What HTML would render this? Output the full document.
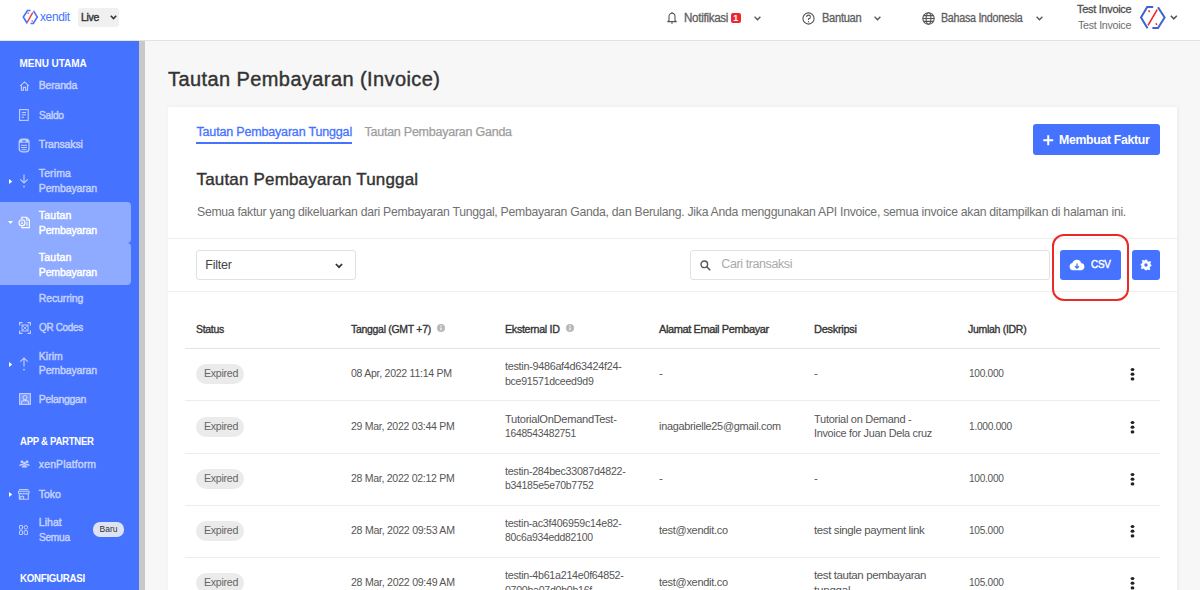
<!DOCTYPE html><html><head><meta charset="utf-8"><style>
*{margin:0;padding:0;box-sizing:border-box}
html,body{width:1200px;height:590px;overflow:hidden;background:#f5f5f5;font-family:"Liberation Sans",sans-serif}
.a{position:absolute;white-space:nowrap}
svg{position:absolute;overflow:visible}
</style></head><body>
<div class="a" style="left:0;top:0;width:1200px;height:40px;background:#fff"></div>
<div class="a" style="left:0;top:40px;width:1200px;height:1px;background:#e3e3e3"></div>
<svg style="left:22px;top:9px" width="17" height="16" viewBox="0 0 17 16">
<g fill="none" stroke="#4573ff" stroke-width="1.6" stroke-linejoin="miter">
<polyline points="8.5,1.5 5.5,1.5 1.3,8 5.3,14.5"/>
<polyline points="11.5,1.8 15.3,8 11.3,14.5 8.5,14.5"/>
</g>
<line x1="10.8" y1="3.5" x2="5.4" y2="13" stroke="#f5333f" stroke-width="1.5"/>
<circle cx="6.2" cy="4.3" r="0.8" fill="#f5333f"/><circle cx="10.2" cy="12" r="0.8" fill="#f5333f"/>
</svg>
<div class="a" style="left:40px;top:10.64px;font-size:12px;line-height:12px;font-weight:normal;color:#4573ff;letter-spacing:-0.388px;">xendit</div>
<div class="a" style="left:78px;top:8px;width:41px;height:19px;background:#f0f0f0;border-radius:3px"></div>
<div class="a" style="left:81px;top:11.77px;font-size:11.5px;line-height:11.5px;font-weight:normal;color:#333;letter-spacing:-0.3px;transform:scaleX(0.9091);transform-origin:0 0;-webkit-text-stroke:0.45px #333;">Live</div>
<svg style="left:110px;top:15px" width="7" height="5" viewBox="0 0 7 5"><polyline points="0.8,0.8 3.5,3.6 6.2,0.8" fill="none" stroke="#333" stroke-width="1.6"/></svg>
<svg style="left:666px;top:11px" width="12" height="13" viewBox="0 0 12 13">
<path d="M3,9.5 V5.5 A3,3.2 0 0 1 9,5.5 V9.5 L10.3,10.6 H1.7 Z" fill="none" stroke="#555" stroke-width="1.1" stroke-linejoin="round"/>
<path d="M5,12 H7" stroke="#555" stroke-width="1.1"/><path d="M6,1 V2.2" stroke="#555" stroke-width="1.1"/>
</svg>
<div class="a" style="left:684px;top:11.54px;font-size:12px;line-height:12px;font-weight:normal;color:#5e5e5e;letter-spacing:-0.3px;transform:scaleX(0.9666);transform-origin:0 0;-webkit-text-stroke:0.3px #5e5e5e;">Notifikasi</div>
<div class="a" style="left:730.5px;top:13px;width:10.5px;height:10px;background:#f0262f;border-radius:2px;color:#fff;font-size:9px;font-weight:bold;line-height:10px;text-align:center">1</div>
<svg style="left:754px;top:16px" width="7" height="5" viewBox="0 0 7 5"><polyline points="0.6,0.8 3.5,3.8 6.4,0.8" fill="none" stroke="#555" stroke-width="1.3"/></svg>
<svg style="left:802px;top:11.5px" width="13" height="13" viewBox="0 0 13 13">
<circle cx="6.5" cy="6.5" r="5.6" fill="none" stroke="#555" stroke-width="1.1"/>
<path d="M4.6,5 A1.9,1.9 0 1 1 6.5,6.9 V8" fill="none" stroke="#555" stroke-width="1.1"/>
<circle cx="6.5" cy="9.7" r="0.7" fill="#555"/>
</svg>
<div class="a" style="left:821.5px;top:11.54px;font-size:12px;line-height:12px;font-weight:normal;color:#5e5e5e;letter-spacing:-0.3px;transform:scaleX(0.9234);transform-origin:0 0;-webkit-text-stroke:0.3px #5e5e5e;">Bantuan</div>
<svg style="left:874px;top:16px" width="7" height="5" viewBox="0 0 7 5"><polyline points="0.6,0.8 3.5,3.8 6.4,0.8" fill="none" stroke="#555" stroke-width="1.3"/></svg>
<svg style="left:922px;top:11.5px" width="13" height="13" viewBox="0 0 13 13">
<g fill="none" stroke="#555" stroke-width="1.1">
<circle cx="6.5" cy="6.5" r="5.7"/><ellipse cx="6.5" cy="6.5" rx="2.4" ry="5.7"/>
<line x1="0.8" y1="6.5" x2="12.2" y2="6.5"/><path d="M1.8,3.6 H11.2 M1.8,9.4 H11.2"/>
</g></svg>
<div class="a" style="left:941px;top:11.54px;font-size:12px;line-height:12px;font-weight:normal;color:#5e5e5e;letter-spacing:-0.3px;transform:scaleX(0.8923);transform-origin:0 0;-webkit-text-stroke:0.3px #5e5e5e;">Bahasa Indonesia</div>
<svg style="left:1036px;top:16px" width="7" height="5" viewBox="0 0 7 5"><polyline points="0.6,0.8 3.5,3.8 6.4,0.8" fill="none" stroke="#555" stroke-width="1.3"/></svg>
<div class="a" style="left:1077px;top:3.97px;font-size:11.5px;line-height:11.5px;font-weight:normal;color:#4e4e4e;letter-spacing:-0.3px;transform:scaleX(0.9513);transform-origin:0 0;-webkit-text-stroke:0.3px #4e4e4e;">Test Invoice</div>
<div class="a" style="left:1078px;top:19.77px;font-size:11.5px;line-height:11.5px;font-weight:normal;color:#6e6e6e;letter-spacing:-0.3px;transform:scaleX(0.9294);transform-origin:0 0;">Test Invoice</div>
<svg style="left:1140px;top:6px" width="26" height="24" viewBox="0 0 26 24">
<g fill="none" stroke="#3d63cf" stroke-width="2" stroke-linejoin="miter">
<polyline points="13.2,0.9 7.2,0.9 1,11.5 7.5,22.3"/>
<polyline points="18,1.2 24.6,11.5 18,22 12.4,22"/>
</g>
<line x1="17.2" y1="3.6" x2="8" y2="19.3" stroke="#f5222d" stroke-width="1.6"/>
<path d="M8.6,4.3 L9.6,6" stroke="#f5222d" stroke-width="1.5"/><path d="M16,17.2 L16.8,19" stroke="#f5222d" stroke-width="1.5"/>
</svg>
<svg style="left:1170px;top:15px" width="8" height="5" viewBox="0 0 8 5"><polyline points="0.8,0.8 3.8,3.8 6.8,0.8" fill="none" stroke="#555" stroke-width="1.6"/></svg>
<div class="a" style="left:0;top:41px;width:139px;height:549px;background:#4573ff"></div>
<div class="a" style="left:139px;top:41px;width:6px;height:549px;background:#c8c8c8"></div>
<div class="a" style="left:0;top:202px;width:130.5px;height:41px;background:#8fabff;border-radius:0 4px 4px 0"></div>
<div class="a" style="left:0;top:243px;width:130.5px;height:42px;background:#8fabff;border-radius:0 4px 4px 0"></div>
<div class="a" style="left:19.5px;top:58.73px;font-size:10px;line-height:10px;font-weight:bold;color:#fff;letter-spacing:-0.029px;">MENU UTAMA</div>
<div class="a" style="left:38.8px;top:80.31px;font-size:10.5px;line-height:10.5px;font-weight:normal;color:#c3d0ff;letter-spacing:-0.21px;-webkit-text-stroke:0.45px #c3d0ff;">Beranda</div>
<div class="a" style="left:38.8px;top:110.11px;font-size:10.5px;line-height:10.5px;font-weight:normal;color:#c3d0ff;letter-spacing:-0.3px;transform:scaleX(0.9723);transform-origin:0 0;-webkit-text-stroke:0.45px #c3d0ff;">Saldo</div>
<div class="a" style="left:38.8px;top:139.41px;font-size:10.5px;line-height:10.5px;font-weight:normal;color:#c3d0ff;letter-spacing:-0.136px;-webkit-text-stroke:0.45px #c3d0ff;">Transaksi</div>
<div class="a" style="left:38.8px;top:168.31px;font-size:10.5px;line-height:10.5px;font-weight:normal;color:#c3d0ff;letter-spacing:0.107px;-webkit-text-stroke:0.45px #c3d0ff;">Terima</div>
<div class="a" style="left:38.8px;top:182.71px;font-size:10.5px;line-height:10.5px;font-weight:normal;color:#c3d0ff;letter-spacing:-0.133px;-webkit-text-stroke:0.45px #c3d0ff;">Pembayaran</div>
<div class="a" style="left:38.8px;top:210.31px;font-size:10.5px;line-height:10.5px;font-weight:normal;color:#fff;letter-spacing:0.223px;-webkit-text-stroke:0.45px #fff;">Tautan</div>
<div class="a" style="left:38.8px;top:224.71px;font-size:10.5px;line-height:10.5px;font-weight:normal;color:#fff;letter-spacing:-0.133px;-webkit-text-stroke:0.45px #fff;">Pembayaran</div>
<div class="a" style="left:38.8px;top:252.31px;font-size:10.5px;line-height:10.5px;font-weight:normal;color:#fff;letter-spacing:0.223px;-webkit-text-stroke:0.45px #fff;">Tautan</div>
<div class="a" style="left:38.8px;top:266.51px;font-size:10.5px;line-height:10.5px;font-weight:normal;color:#fff;letter-spacing:-0.133px;-webkit-text-stroke:0.45px #fff;">Pembayaran</div>
<div class="a" style="left:38.8px;top:293.31px;font-size:10.5px;line-height:10.5px;font-weight:normal;color:#c3d0ff;letter-spacing:-0.135px;-webkit-text-stroke:0.45px #c3d0ff;">Recurring</div>
<div class="a" style="left:38.8px;top:322.31px;font-size:10.5px;line-height:10.5px;font-weight:normal;color:#c3d0ff;letter-spacing:-0.3px;transform:scaleX(0.9428);transform-origin:0 0;-webkit-text-stroke:0.45px #c3d0ff;">QR Codes</div>
<div class="a" style="left:38.8px;top:350.71px;font-size:10.5px;line-height:10.5px;font-weight:normal;color:#c3d0ff;letter-spacing:0.034px;-webkit-text-stroke:0.45px #c3d0ff;">Kirim</div>
<div class="a" style="left:38.8px;top:365.11px;font-size:10.5px;line-height:10.5px;font-weight:normal;color:#c3d0ff;letter-spacing:-0.133px;-webkit-text-stroke:0.45px #c3d0ff;">Pembayaran</div>
<div class="a" style="left:38.8px;top:393.61px;font-size:10.5px;line-height:10.5px;font-weight:normal;color:#c3d0ff;letter-spacing:-0.322px;-webkit-text-stroke:0.45px #c3d0ff;">Pelanggan</div>
<div class="a" style="left:19.5px;top:437.04px;font-size:10px;line-height:10px;font-weight:bold;color:#fff;letter-spacing:-0.3px;transform:scaleX(0.9589);transform-origin:0 0;">APP &amp; PARTNER</div>
<div class="a" style="left:38.8px;top:459.11px;font-size:10.5px;line-height:10.5px;font-weight:normal;color:#c3d0ff;letter-spacing:0.122px;-webkit-text-stroke:0.45px #c3d0ff;">xenPlatform</div>
<div class="a" style="left:38.8px;top:488.91px;font-size:10.5px;line-height:10.5px;font-weight:normal;color:#c3d0ff;letter-spacing:-0.047px;-webkit-text-stroke:0.45px #c3d0ff;">Toko</div>
<div class="a" style="left:38.8px;top:517.41px;font-size:10.5px;line-height:10.5px;font-weight:normal;color:#c3d0ff;letter-spacing:0.037px;-webkit-text-stroke:0.45px #c3d0ff;">Lihat</div>
<div class="a" style="left:38.8px;top:531.81px;font-size:10.5px;line-height:10.5px;font-weight:normal;color:#c3d0ff;letter-spacing:-0.3px;transform:scaleX(0.9681);transform-origin:0 0;-webkit-text-stroke:0.45px #c3d0ff;">Semua</div>
<div class="a" style="left:93px;top:522px;width:31px;height:14.5px;background:#dde3f3;border-radius:7px;color:#333;font-size:8.5px;line-height:14.5px;text-align:center">Baru</div>
<div class="a" style="left:19.5px;top:573.93px;font-size:10px;line-height:10px;font-weight:bold;color:#fff;letter-spacing:-0.3px;transform:scaleX(0.9729);transform-origin:0 0;">KONFIGURASI</div>
<svg style="left:19px;top:81px" width="11" height="10" viewBox="0 0 11 10"><path d="M1.2,4.8 L5.5,0.9 L9.8,4.8 M2.4,3.9 V9.2 H4.4 V6.4 H6.6 V9.2 H8.6 V3.9" fill="none" stroke="#c3d0ff" stroke-width="1.1"/></svg>
<svg style="left:19px;top:109px" width="10" height="12" viewBox="0 0 10 12"><rect x="0.6" y="0.6" width="8.6" height="10.8" fill="none" stroke="#c3d0ff" stroke-width="1.1"/><path d="M2.8,3.5 H7 M2.8,5.8 H7 M2.8,8.2 H5" stroke="#c3d0ff" stroke-width="1"/></svg>
<svg style="left:18px;top:137.5px" width="12" height="15" viewBox="0 0 12 15"><rect x="1.2" y="1" width="9.8" height="12.8" rx="3" fill="none" stroke="#c3d0ff" stroke-width="1.2"/><path d="M1.5,4.8 V3.5 Q1.5,1 5,1 H7 Q10.8,1 10.8,3.5 V4.8 Z" fill="#c3d0ff"/><path d="M4,3 H8 M6,2.5 V4.5" stroke="#4573ff" stroke-width="0.9"/><path d="M3,7.3 H9 M3,9.5 H9 M3.5,11.7 H8.5" stroke="#c3d0ff" stroke-width="1"/></svg>
<svg style="left:19px;top:174px" width="10" height="14" viewBox="0 0 10 14"><path d="M5,0.5 V9 M1.3,5.3 L5,9 L8.7,5.3" fill="none" stroke="#c3d0ff" stroke-width="1.1"/><circle cx="5" cy="12.6" r="0.9" fill="#c3d0ff"/></svg>
<svg style="left:18px;top:216px" width="13" height="13" viewBox="0 0 13 13"><path d="M3.8,3 V1.2 H8.6 L11.4,4 V11.6 H3.8 V10.2" fill="none" stroke="#fff" stroke-width="1.1"/><path d="M8.4,1.2 V4.2 H11.4" fill="none" stroke="#fff" stroke-width="0.9"/><circle cx="4" cy="6.8" r="3" fill="none" stroke="#fff" stroke-width="1.1"/><path d="M3,6 H5 M3,7.6 H5" stroke="#fff" stroke-width="0.8"/><path d="M8,7 H10 M8,9 H10" stroke="#fff" stroke-width="0.9"/></svg>
<svg style="left:18.5px;top:322px" width="12" height="12" viewBox="0 0 12 12"><path d="M0.6,3.5 V0.6 H3.5 M8.5,0.6 H11.4 V3.5 M11.4,8.5 V11.4 H8.5 M3.5,11.4 H0.6 V8.5" fill="none" stroke="#c3d0ff" stroke-width="1.1"/><rect x="3" y="3" width="6" height="6" fill="none" stroke="#c3d0ff" stroke-width="1"/><path d="M3,3 L9,9 M9,3 L3,9" stroke="#c3d0ff" stroke-width="0.8"/></svg>
<svg style="left:19px;top:357px" width="10" height="14" viewBox="0 0 10 14"><path d="M5,9.5 V1 M1.3,4.7 L5,1 L8.7,4.7" fill="none" stroke="#c3d0ff" stroke-width="1.1"/><circle cx="5" cy="12.6" r="0.9" fill="#c3d0ff"/></svg>
<svg style="left:18.5px;top:393px" width="12" height="12" viewBox="0 0 12 12"><rect x="0.6" y="0.6" width="10.8" height="10.8" fill="#c3d0ff" fill-opacity="0.35" stroke="#c3d0ff" stroke-width="1.1"/><circle cx="6" cy="4.5" r="2" fill="none" stroke="#c3d0ff" stroke-width="1.1"/><path d="M2.5,11 V9.5 Q2.5,7.6 4.5,7.6 H7.5 Q9.5,7.6 9.5,9.5 V11" fill="none" stroke="#c3d0ff" stroke-width="1.1"/></svg>
<svg style="left:19px;top:460px" width="11" height="8" viewBox="0 0 11 8"><circle cx="3" cy="1.8" r="1.5" fill="#c3d0ff"/><circle cx="8" cy="1.8" r="1.5" fill="#c3d0ff"/><circle cx="5.5" cy="3.2" r="1.5" fill="#c3d0ff"/><path d="M0,6 Q0.5,3.8 3,3.8 Q4.5,3.8 5,5 Z M11,6 Q10.5,3.8 8,3.8 Q6.5,3.8 6,5 Z M2.6,7.6 Q3,5 5.5,5 Q8,5 8.4,7.6 Z" fill="#c3d0ff"/></svg>
<svg style="left:18.3px;top:488.5px" width="12" height="11" viewBox="0 0 12 11"><path d="M1,0.6 H10.5" stroke="#c3d0ff" stroke-width="1.1"/><path d="M0.6,2.2 H11 V3.8 Q11,5 9.8,5 Q8.6,5 8.6,3.8 Q8.6,5 7.2,5 Q5.8,5 5.8,3.8 Q5.8,5 4.4,5 Q3,5 3,3.8 Q3,5 1.8,5 Q0.6,5 0.6,3.8 Z" fill="none" stroke="#c3d0ff" stroke-width="1.1"/><path d="M1.3,5 V10.3 H10.3 V5 M2.8,10.3 V7.2 H5.6 V10.3" fill="none" stroke="#c3d0ff" stroke-width="1.1"/></svg>
<svg style="left:19.3px;top:524.8px" width="9" height="10" viewBox="0 0 9 10"><g fill="none" stroke="#c3d0ff" stroke-width="1"><rect x="0.5" y="0.5" width="3" height="3.6" rx="0.5"/><rect x="5.2" y="0.5" width="3.3" height="3.6" rx="1.6"/><rect x="0.5" y="5.7" width="3" height="3.8" rx="0.5"/><rect x="5.2" y="5.7" width="3.3" height="3.8" rx="0.5"/></g></svg>
<svg style="left:9px;top:178.5px" width="4" height="5" viewBox="0 0 4 5"><path d="M0,0 L3.2,2.5 L0,5 Z" fill="#fff"/></svg>
<svg style="left:9px;top:361.5px" width="4" height="5" viewBox="0 0 4 5"><path d="M0,0 L3.2,2.5 L0,5 Z" fill="#fff"/></svg>
<svg style="left:9px;top:492.0px" width="4" height="5" viewBox="0 0 4 5"><path d="M0,0 L3.2,2.5 L0,5 Z" fill="#fff"/></svg>
<svg style="left:8px;top:220.5px" width="5" height="4" viewBox="0 0 5 4"><path d="M0,0 L5,0 L2.5,3 Z" fill="#fff"/></svg>
<div class="a" style="left:145px;top:41px;width:1055px;height:549px;background:#f7f7f7"></div>
<div class="a" style="left:168px;top:69.37px;font-size:20px;line-height:20px;font-weight:normal;color:#333;letter-spacing:0.412px;-webkit-text-stroke:0.4px #333;">Tautan Pembayaran (Invoice)</div>
<div class="a" style="left:168px;top:107px;width:1009px;height:490px;background:#fff;box-shadow:1px 0 4px rgba(0,0,0,.06)"></div>
<div class="a" style="left:196.5px;top:125.82px;font-size:12.5px;line-height:12.5px;font-weight:normal;color:#4573ff;letter-spacing:-0.174px;-webkit-text-stroke:0.3px #4573ff;">Tautan Pembayaran Tunggal</div>
<div class="a" style="left:196px;top:142px;width:156px;height:2px;background:#4573ff"></div>
<div class="a" style="left:364.5px;top:125.82px;font-size:12.5px;line-height:12.5px;font-weight:normal;color:#9d9d9d;letter-spacing:-0.242px;-webkit-text-stroke:0.25px #9d9d9d;">Tautan Pembayaran Ganda</div>
<div class="a" style="left:1033px;top:124px;width:127px;height:31px;background:#4573ff;border-radius:3px"></div>
<svg style="left:1042.5px;top:135.3px" width="11" height="11" viewBox="0 0 11 11"><path d="M5.25,0.3 V10.2 M0.3,5.25 H10.2" stroke="#fff" stroke-width="2"/></svg>
<div class="a" style="left:1059px;top:133.99px;font-size:12.3px;line-height:12.3px;font-weight:bold;color:#fff;letter-spacing:-0.322px;">Membuat Faktur</div>
<div class="a" style="left:196.5px;top:170.61px;font-size:17px;line-height:17px;font-weight:normal;color:#333;letter-spacing:0.175px;-webkit-text-stroke:0.4px #333;">Tautan Pembayaran Tunggal</div>
<div class="a" style="left:196.5px;top:205.07px;font-size:13.5px;line-height:13.5px;font-weight:normal;color:#707070;letter-spacing:-0.3px;transform:scaleX(0.9050);transform-origin:0 0;">Semua faktur yang dikeluarkan dari Pembayaran Tunggal, Pembayaran Ganda, dan Berulang. Jika Anda menggunakan API Invoice, semua invoice akan ditampilkan di halaman ini.</div>
<div class="a" style="left:168px;top:238px;width:1009px;height:1px;background:#eeeeee"></div>
<div class="a" style="left:168px;top:291px;width:1009px;height:1px;background:#eeeeee"></div>
<div class="a" style="left:196px;top:250px;width:159.5px;height:30px;border:1px solid #dfe2e2;border-radius:3px"></div>
<div class="a" style="left:205.3px;top:258.72px;font-size:12.5px;line-height:12.5px;font-weight:normal;color:#444;letter-spacing:-0.223px;">Filter</div>
<svg style="left:334.5px;top:262.5px" width="8" height="6" viewBox="0 0 8 6"><polyline points="0.9,1 4,4.2 7.1,1" fill="none" stroke="#333" stroke-width="1.7"/></svg>
<div class="a" style="left:689.5px;top:250px;width:360px;height:30px;border:1px solid #e2e2e2;border-radius:3px"></div>
<svg style="left:700px;top:260px" width="11" height="11" viewBox="0 0 11 11"><circle cx="4.3" cy="4.3" r="3.3" fill="none" stroke="#555" stroke-width="1.4"/><path d="M6.8,6.8 L10.2,10.2" stroke="#555" stroke-width="1.6"/></svg>
<div class="a" style="left:721.3px;top:258.12px;font-size:12.5px;line-height:12.5px;font-weight:normal;color:#aaa;letter-spacing:-0.403px;">Cari transaksi</div>
<div class="a" style="left:1060px;top:250px;width:60.5px;height:29.5px;background:#4573ff;border-radius:3px"></div>
<svg style="left:1069px;top:259px" width="16" height="12" viewBox="0 0 16 12"><path d="M4,11.2 A3.6,3.6 0 0 1 3.4,4.1 A4.6,4.6 0 0 1 12.2,3.9 A3.7,3.7 0 0 1 12.4,11.2 Z" fill="#fff"/><path d="M8,4.5 V9 M6,7.2 L8,9.2 L10,7.2" fill="none" stroke="#4573ff" stroke-width="1.3"/></svg>
<div class="a" style="left:1090.5px;top:259.01px;font-size:11.8px;line-height:11.8px;font-weight:normal;color:#fff;letter-spacing:-0.3px;transform:scaleX(0.8366);transform-origin:0 0;-webkit-text-stroke:0.5px #fff;">CSV</div>
<div class="a" style="left:1132px;top:250px;width:28px;height:29.5px;background:#4573ff;border-radius:3px"></div>
<svg style="left:1140px;top:259px" width="12" height="12" viewBox="0 0 12 12"><g transform="translate(6 6)"><path d="M-1.2,-5.3 H1.2 L1.5,-3.8 L2.9,-3.2 L4.1,-4.1 L5.2,-3 L4.3,-1.7 L4.8,-0.3 L5.4,-0.3 V1.2 L4.2,1.6 L3.6,3 L4.4,4.2 L3.1,5.3 L1.8,4.4 L1.2,4.7 L1,5.3 H-1.2 L-1.5,4 L-2.9,3.4 L-4.1,4.3 L-5.2,3.1 L-4.3,1.8 L-4.8,0.4 L-5.3,0.2 V-1.2 L-4,-1.6 L-3.5,-3 L-4.3,-4.2 L-3.1,-5.2 L-1.8,-4.3 L-1.3,-4.6 Z" fill="#fff"/><circle r="1.7" fill="#4573ff"/></g></svg>
<div class="a" style="left:1052px;top:233.5px;width:77px;height:67.5px;border:2.3px solid #ec2a25;border-radius:12px"></div>
<div class="a" style="left:196px;top:323.69px;font-size:11px;line-height:11px;font-weight:normal;color:#333;letter-spacing:-0.3px;transform:scaleX(0.9525);transform-origin:0 0;-webkit-text-stroke:0.35px #333;">Status</div>
<div class="a" style="left:351px;top:323.69px;font-size:11px;line-height:11px;font-weight:normal;color:#333;letter-spacing:-0.3px;transform:scaleX(0.9518);transform-origin:0 0;-webkit-text-stroke:0.35px #333;">Tanggal (GMT +7)</div>
<div class="a" style="left:505px;top:323.69px;font-size:11px;line-height:11px;font-weight:normal;color:#333;letter-spacing:-0.3px;transform:scaleX(0.9706);transform-origin:0 0;-webkit-text-stroke:0.35px #333;">Eksternal ID</div>
<div class="a" style="left:659px;top:323.69px;font-size:11px;line-height:11px;font-weight:normal;color:#333;letter-spacing:-0.391px;-webkit-text-stroke:0.35px #333;">Alamat Email Pembayar</div>
<div class="a" style="left:814px;top:323.69px;font-size:11px;line-height:11px;font-weight:normal;color:#333;letter-spacing:-0.286px;-webkit-text-stroke:0.35px #333;">Deskripsi</div>
<div class="a" style="left:968px;top:323.69px;font-size:11px;line-height:11px;font-weight:normal;color:#333;letter-spacing:-0.3px;transform:scaleX(0.9536);transform-origin:0 0;-webkit-text-stroke:0.35px #333;">Jumlah (IDR)</div>
<svg style="left:437px;top:324px" width="8" height="8" viewBox="0 0 8 8"><circle cx="4" cy="4" r="4" fill="#b8b8b8"/><path d="M4,3.4 V6.3" stroke="#fff" stroke-width="1.2"/><circle cx="4" cy="2" r="0.65" fill="#fff"/></svg>
<svg style="left:566px;top:324px" width="8" height="8" viewBox="0 0 8 8"><circle cx="4" cy="4" r="4" fill="#b8b8b8"/><path d="M4,3.4 V6.3" stroke="#fff" stroke-width="1.2"/><circle cx="4" cy="2" r="0.65" fill="#fff"/></svg>
<div class="a" style="left:185px;top:347.5px;width:975px;height:1.5px;background:#dfe4e4"></div>
<div class="a" style="left:196px;top:364.30px;width:48px;height:20px;border-radius:10px;background:#ebebeb"></div>
<div class="a" style="left:203.5px;top:368.47px;font-size:11.5px;line-height:11.5px;font-weight:normal;color:#666;letter-spacing:-0.3px;transform:scaleX(0.9240);transform-origin:0 0;">Expired</div>
<div class="a" style="left:351px;top:368.47px;font-size:11.5px;line-height:11.5px;font-weight:normal;color:#555;letter-spacing:-0.3px;transform:scaleX(0.9174);transform-origin:0 0;">08 Apr, 2022 11:14 PM</div>
<div class="a" style="left:505px;top:361.37px;font-size:11.5px;line-height:11.5px;font-weight:normal;color:#555;letter-spacing:-0.3px;transform:scaleX(0.9401);transform-origin:0 0;">testin-9486af4d63424f24-</div>
<div class="a" style="left:505px;top:375.57px;font-size:11.5px;line-height:11.5px;font-weight:normal;color:#555;letter-spacing:-0.3px;transform:scaleX(0.9194);transform-origin:0 0;">bce91571dceed9d9</div>
<div class="a" style="left:659px;top:368.47px;font-size:11.5px;line-height:11.5px;font-weight:normal;color:#555;letter-spacing:0px;">-</div>
<div class="a" style="left:814px;top:368.47px;font-size:11.5px;line-height:11.5px;font-weight:normal;color:#555;letter-spacing:0px;">-</div>
<div class="a" style="left:968.5px;top:368.47px;font-size:11.5px;line-height:11.5px;font-weight:normal;color:#555;letter-spacing:-0.3px;transform:scaleX(0.8788);transform-origin:0 0;">100.000</div>
<svg style="left:1129.5px;top:367.30px" width="5" height="14" viewBox="0 0 5 14"><ellipse cx="2.5" cy="2.5" rx="1.9" ry="1.6" fill="#222"/><ellipse cx="2.5" cy="7.2" rx="1.9" ry="1.6" fill="#222"/><ellipse cx="2.5" cy="11.9" rx="1.9" ry="1.6" fill="#222"/></svg>
<div class="a" style="left:185px;top:400.30px;width:975px;height:1px;background:#ececec"></div>
<div class="a" style="left:196px;top:416.55px;width:48px;height:20px;border-radius:10px;background:#ebebeb"></div>
<div class="a" style="left:203.5px;top:420.72px;font-size:11.5px;line-height:11.5px;font-weight:normal;color:#666;letter-spacing:-0.3px;transform:scaleX(0.9240);transform-origin:0 0;">Expired</div>
<div class="a" style="left:351px;top:420.72px;font-size:11.5px;line-height:11.5px;font-weight:normal;color:#555;letter-spacing:-0.3px;transform:scaleX(0.9135);transform-origin:0 0;">29 Mar, 2022 03:44 PM</div>
<div class="a" style="left:505px;top:413.62px;font-size:11.5px;line-height:11.5px;font-weight:normal;color:#555;letter-spacing:-0.3px;transform:scaleX(0.9670);transform-origin:0 0;">TutorialOnDemandTest-</div>
<div class="a" style="left:505px;top:427.82px;font-size:11.5px;line-height:11.5px;font-weight:normal;color:#555;letter-spacing:-0.3px;transform:scaleX(0.8958);transform-origin:0 0;">1648543482751</div>
<div class="a" style="left:659px;top:420.72px;font-size:11.5px;line-height:11.5px;font-weight:normal;color:#555;letter-spacing:-0.3px;transform:scaleX(0.9477);transform-origin:0 0;">inagabrielle25@gmail.com</div>
<div class="a" style="left:814px;top:413.62px;font-size:11.5px;line-height:11.5px;font-weight:normal;color:#555;letter-spacing:-0.3px;transform:scaleX(0.9592);transform-origin:0 0;">Tutorial on Demand -</div>
<div class="a" style="left:814px;top:427.82px;font-size:11.5px;line-height:11.5px;font-weight:normal;color:#555;letter-spacing:-0.3px;transform:scaleX(0.9414);transform-origin:0 0;">Invoice for Juan Dela cruz</div>
<div class="a" style="left:968.5px;top:420.72px;font-size:11.5px;line-height:11.5px;font-weight:normal;color:#555;letter-spacing:-0.3px;transform:scaleX(0.8849);transform-origin:0 0;">1.000.000</div>
<svg style="left:1129.5px;top:419.55px" width="5" height="14" viewBox="0 0 5 14"><ellipse cx="2.5" cy="2.5" rx="1.9" ry="1.6" fill="#222"/><ellipse cx="2.5" cy="7.2" rx="1.9" ry="1.6" fill="#222"/><ellipse cx="2.5" cy="11.9" rx="1.9" ry="1.6" fill="#222"/></svg>
<div class="a" style="left:185px;top:452.55px;width:975px;height:1px;background:#ececec"></div>
<div class="a" style="left:196px;top:468.80px;width:48px;height:20px;border-radius:10px;background:#ebebeb"></div>
<div class="a" style="left:203.5px;top:472.97px;font-size:11.5px;line-height:11.5px;font-weight:normal;color:#666;letter-spacing:-0.3px;transform:scaleX(0.9240);transform-origin:0 0;">Expired</div>
<div class="a" style="left:351px;top:472.97px;font-size:11.5px;line-height:11.5px;font-weight:normal;color:#555;letter-spacing:-0.3px;transform:scaleX(0.9135);transform-origin:0 0;">28 Mar, 2022 02:12 PM</div>
<div class="a" style="left:505px;top:465.87px;font-size:11.5px;line-height:11.5px;font-weight:normal;color:#555;letter-spacing:-0.3px;transform:scaleX(0.9300);transform-origin:0 0;">testin-284bec33087d4822-</div>
<div class="a" style="left:505px;top:480.07px;font-size:11.5px;line-height:11.5px;font-weight:normal;color:#555;letter-spacing:-0.3px;transform:scaleX(0.9073);transform-origin:0 0;">b34185e5e70b7752</div>
<div class="a" style="left:659px;top:472.97px;font-size:11.5px;line-height:11.5px;font-weight:normal;color:#555;letter-spacing:0px;">-</div>
<div class="a" style="left:814px;top:472.97px;font-size:11.5px;line-height:11.5px;font-weight:normal;color:#555;letter-spacing:0px;">-</div>
<div class="a" style="left:968.5px;top:472.97px;font-size:11.5px;line-height:11.5px;font-weight:normal;color:#555;letter-spacing:-0.3px;transform:scaleX(0.8788);transform-origin:0 0;">100.000</div>
<svg style="left:1129.5px;top:471.80px" width="5" height="14" viewBox="0 0 5 14"><ellipse cx="2.5" cy="2.5" rx="1.9" ry="1.6" fill="#222"/><ellipse cx="2.5" cy="7.2" rx="1.9" ry="1.6" fill="#222"/><ellipse cx="2.5" cy="11.9" rx="1.9" ry="1.6" fill="#222"/></svg>
<div class="a" style="left:185px;top:504.80px;width:975px;height:1px;background:#ececec"></div>
<div class="a" style="left:196px;top:521.05px;width:48px;height:20px;border-radius:10px;background:#ebebeb"></div>
<div class="a" style="left:203.5px;top:525.22px;font-size:11.5px;line-height:11.5px;font-weight:normal;color:#666;letter-spacing:-0.3px;transform:scaleX(0.9240);transform-origin:0 0;">Expired</div>
<div class="a" style="left:351px;top:525.22px;font-size:11.5px;line-height:11.5px;font-weight:normal;color:#555;letter-spacing:-0.3px;transform:scaleX(0.9206);transform-origin:0 0;">28 Mar, 2022 09:53 AM</div>
<div class="a" style="left:505px;top:518.12px;font-size:11.5px;line-height:11.5px;font-weight:normal;color:#555;letter-spacing:-0.3px;transform:scaleX(0.9259);transform-origin:0 0;">testin-ac3f406959c14e82-</div>
<div class="a" style="left:505px;top:532.32px;font-size:11.5px;line-height:11.5px;font-weight:normal;color:#555;letter-spacing:-0.3px;transform:scaleX(0.9050);transform-origin:0 0;">80c6a934edd82100</div>
<div class="a" style="left:659px;top:525.22px;font-size:11.5px;line-height:11.5px;font-weight:normal;color:#555;letter-spacing:-0.3px;transform:scaleX(0.9549);transform-origin:0 0;">test@xendit.co</div>
<div class="a" style="left:814px;top:525.22px;font-size:11.5px;line-height:11.5px;font-weight:normal;color:#555;letter-spacing:-0.386px;">test single payment link</div>
<div class="a" style="left:968.5px;top:525.22px;font-size:11.5px;line-height:11.5px;font-weight:normal;color:#555;letter-spacing:-0.3px;transform:scaleX(0.8788);transform-origin:0 0;">105.000</div>
<svg style="left:1129.5px;top:524.05px" width="5" height="14" viewBox="0 0 5 14"><ellipse cx="2.5" cy="2.5" rx="1.9" ry="1.6" fill="#222"/><ellipse cx="2.5" cy="7.2" rx="1.9" ry="1.6" fill="#222"/><ellipse cx="2.5" cy="11.9" rx="1.9" ry="1.6" fill="#222"/></svg>
<div class="a" style="left:185px;top:557.05px;width:975px;height:1px;background:#ececec"></div>
<div class="a" style="left:196px;top:573.30px;width:48px;height:20px;border-radius:10px;background:#ebebeb"></div>
<div class="a" style="left:203.5px;top:577.47px;font-size:11.5px;line-height:11.5px;font-weight:normal;color:#666;letter-spacing:-0.3px;transform:scaleX(0.9240);transform-origin:0 0;">Expired</div>
<div class="a" style="left:351px;top:577.47px;font-size:11.5px;line-height:11.5px;font-weight:normal;color:#555;letter-spacing:-0.3px;transform:scaleX(0.9206);transform-origin:0 0;">28 Mar, 2022 09:49 AM</div>
<div class="a" style="left:505px;top:570.37px;font-size:11.5px;line-height:11.5px;font-weight:normal;color:#555;letter-spacing:-0.3px;transform:scaleX(0.9330);transform-origin:0 0;">testin-4b61a214e0f64852-</div>
<div class="a" style="left:505px;top:584.57px;font-size:11.5px;line-height:11.5px;font-weight:normal;color:#555;letter-spacing:-0.3px;transform:scaleX(0.9221);transform-origin:0 0;">0700ba07d0b0b16f</div>
<div class="a" style="left:659px;top:577.47px;font-size:11.5px;line-height:11.5px;font-weight:normal;color:#555;letter-spacing:-0.3px;transform:scaleX(0.9549);transform-origin:0 0;">test@xendit.co</div>
<div class="a" style="left:814px;top:570.37px;font-size:11.5px;line-height:11.5px;font-weight:normal;color:#555;letter-spacing:-0.397px;">test tautan pembayaran</div>
<div class="a" style="left:814px;top:584.57px;font-size:11.5px;line-height:11.5px;font-weight:normal;color:#555;letter-spacing:-0.196px;">tunggal</div>
<div class="a" style="left:968.5px;top:577.47px;font-size:11.5px;line-height:11.5px;font-weight:normal;color:#555;letter-spacing:-0.3px;transform:scaleX(0.8788);transform-origin:0 0;">105.000</div>
<svg style="left:1129.5px;top:576.30px" width="5" height="14" viewBox="0 0 5 14"><ellipse cx="2.5" cy="2.5" rx="1.9" ry="1.6" fill="#222"/><ellipse cx="2.5" cy="7.2" rx="1.9" ry="1.6" fill="#222"/><ellipse cx="2.5" cy="11.9" rx="1.9" ry="1.6" fill="#222"/></svg>
</body></html>
